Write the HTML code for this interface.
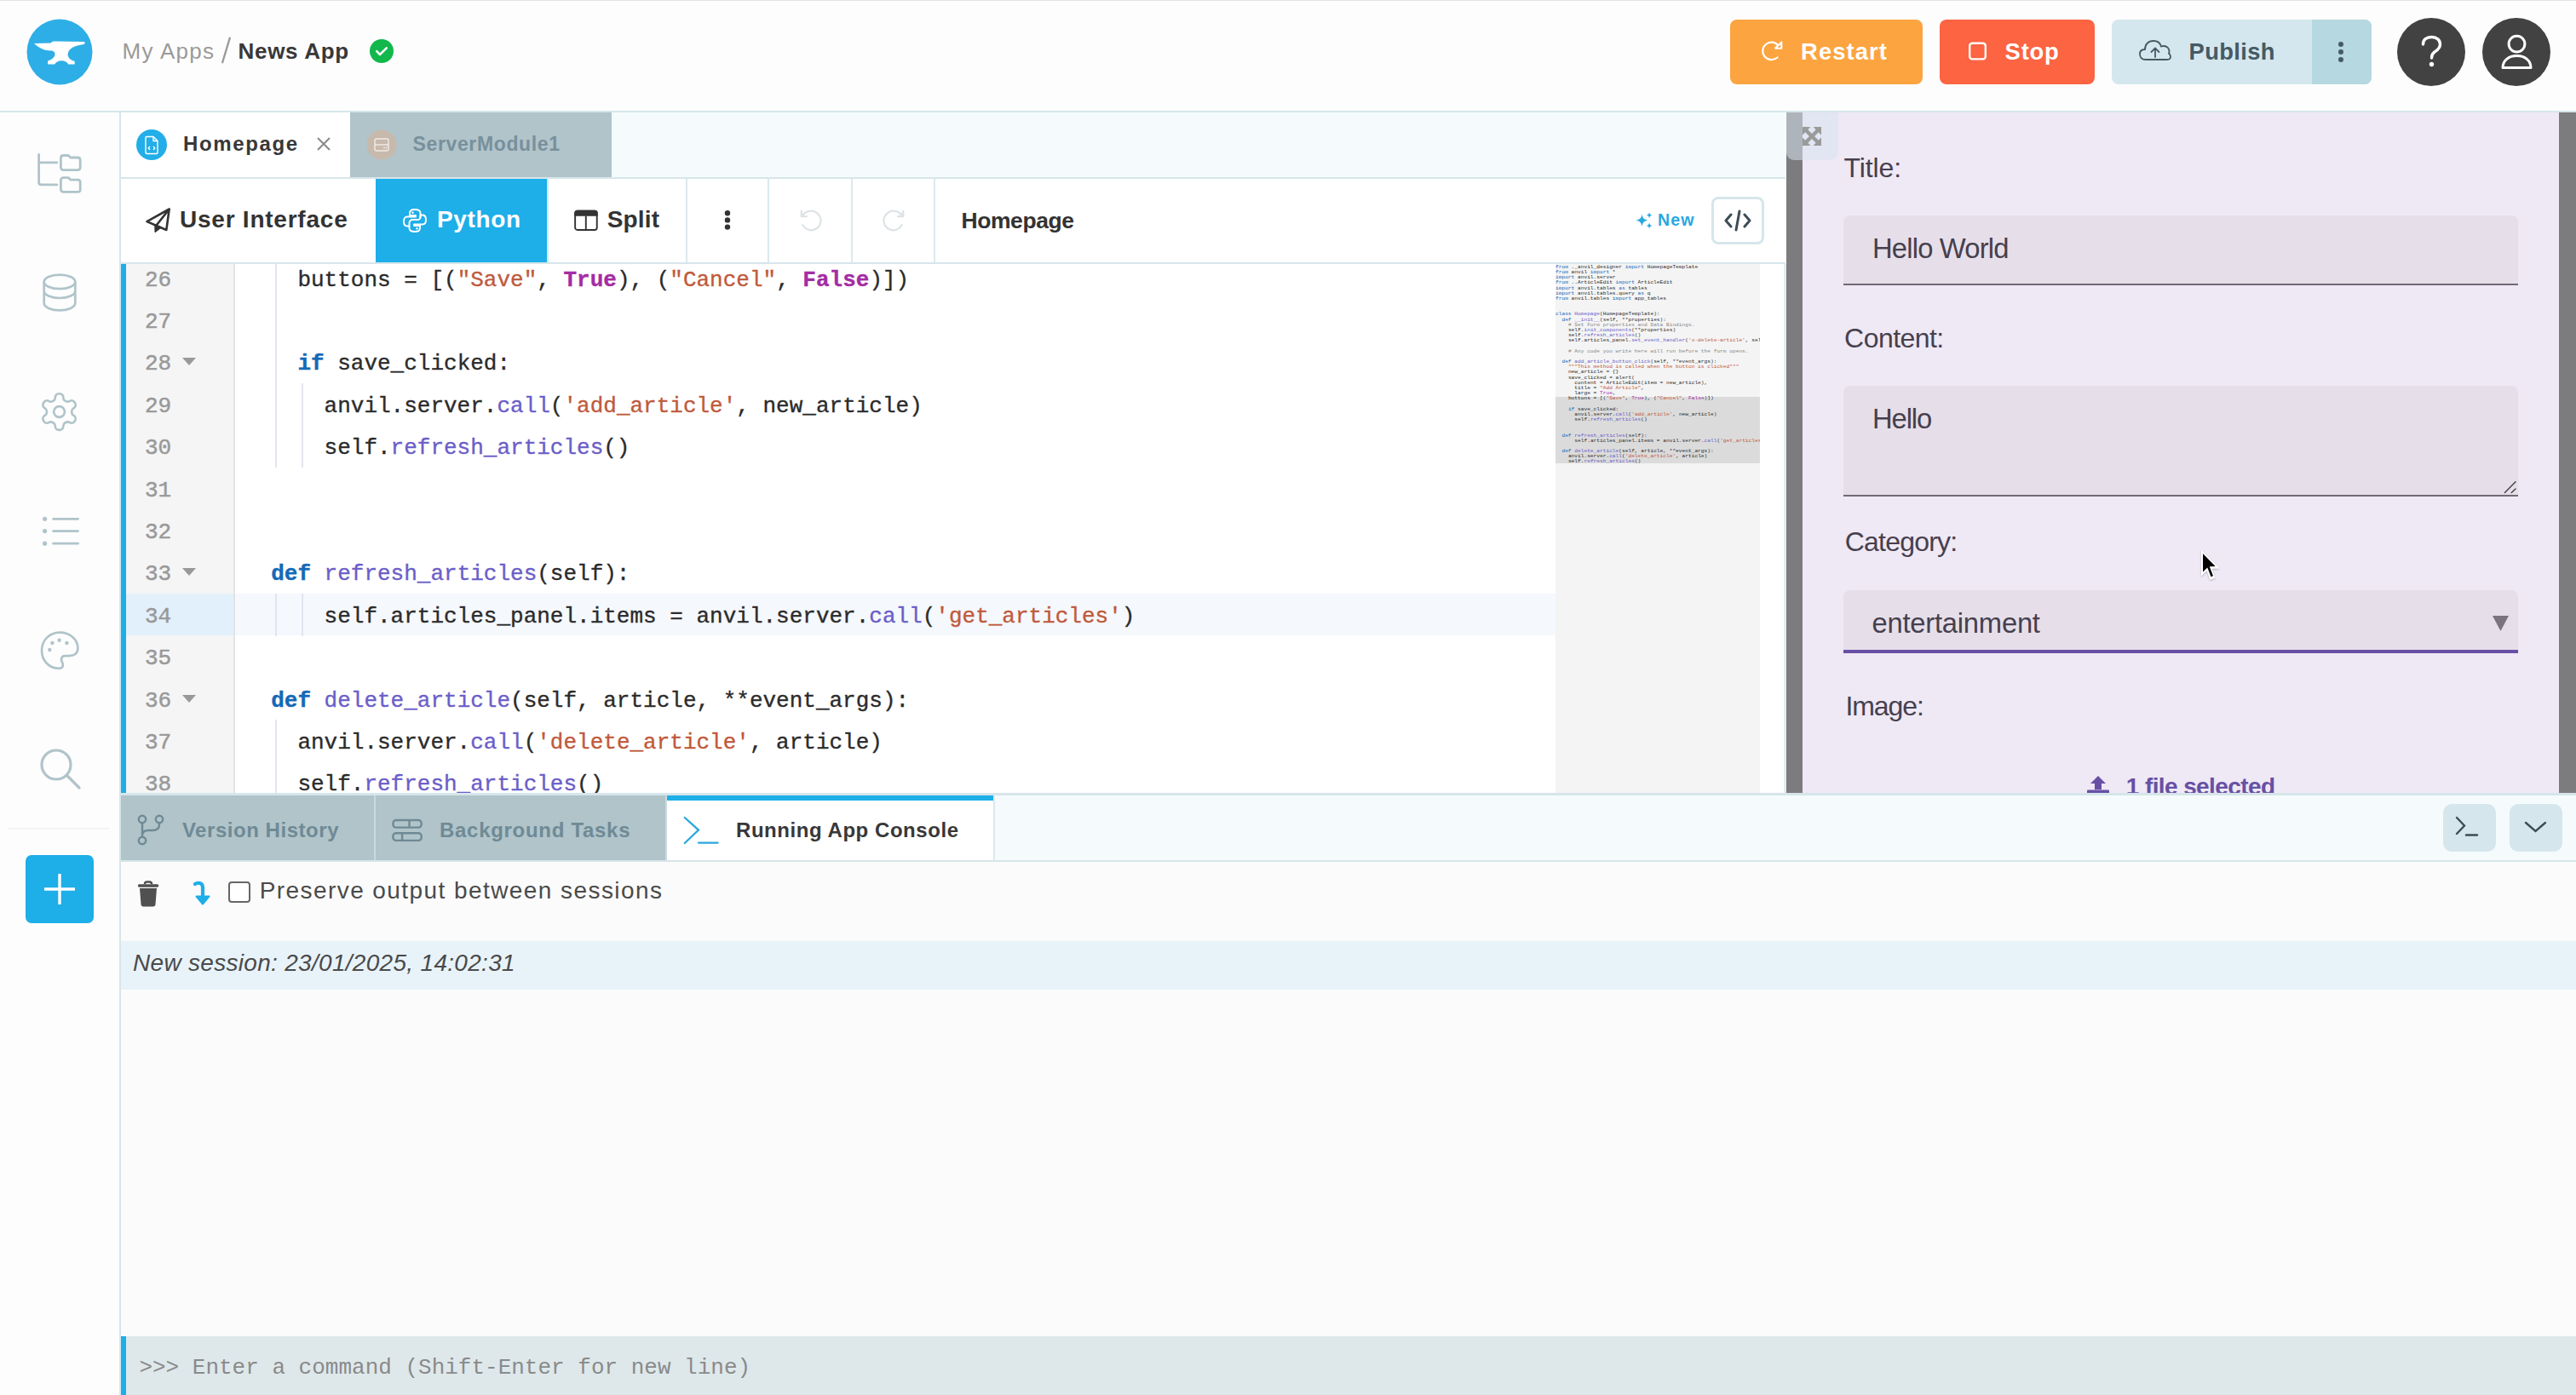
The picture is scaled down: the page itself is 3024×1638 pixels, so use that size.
<!DOCTYPE html>
<html><head><meta charset="utf-8"><title>Anvil - News App</title>
<style>
html,body{margin:0;padding:0;}
body{width:3024px;height:1638px;position:relative;overflow:hidden;background:#fdfdfd;font-family:"Liberation Sans",sans-serif;}
.r{position:absolute;display:block;}
.t{position:absolute;white-space:pre;}
</style></head><body>
<div class="r" style="left:0px;top:0px;width:3024px;height:1px;background:#e2e2e2;"></div>
<div class="r" style="left:0px;top:130px;width:3024px;height:2px;background:#d6e6eb;"></div>
<svg class="r" style="left:31px;top:22px;" width="78" height="78" viewBox="0 0 78 78"><circle cx="39" cy="39" r="38.5" fill="#2eaee6"/><path d="M9 29.1 L29 28.5 L29.9 27 L32.6 26.4 L67.9 27 C69 27.5 69 29.5 67.25 30 L61.2 31.25 C56 32.5 49 35 48.6 42.1 C48.5 45 51 48.5 56.7 49.9 V53.5 H49.2 C48 51 45 49.3 41 49.3 C37.5 49.3 34.5 51 33.2 53.5 H25.1 V49.6 C29 48.5 33.5 45.5 33.5 41.5 C33.5 38 30 37.6 28.1 37.6 C22 37.5 16 35.5 9 29.1 Z" fill="#fff"/></svg>
<div class="t" style="left:143.60px;top:46.99px;font-size:26px;line-height:26px;color:#9a9a9a;font-family:'Liberation Sans', sans-serif;letter-spacing:1.282px;">My Apps</div>
<svg class="r" style="left:255px;top:40px;" width="20" height="40" viewBox="0 0 20 40"><path d="M14.8 4.6 L6.2 33.2" stroke="#9a9a9a" stroke-width="2.3" stroke-linecap="round"/></svg>
<div class="t" style="left:279.50px;top:46.99px;font-size:26px;line-height:26px;color:#383838;font-family:'Liberation Sans', sans-serif;font-weight:700;letter-spacing:0.711px;">News App</div>
<svg class="r" style="left:433px;top:45px;" width="30" height="30" viewBox="0 0 30 30"><circle cx="15" cy="15" r="14" fill="#12b84b"/><path d="M9.2 15.2 l3.8 3.8 l7.8 -7.6" stroke="#fff" stroke-width="2.6" fill="none" stroke-linecap="round" stroke-linejoin="round"/></svg>
<div class="r" style="left:2031px;top:23px;width:226px;height:76px;background:#fca43f;border-radius:8px;"></div>
<svg class="r" style="left:2064.5px;top:45px;" width="34" height="30" viewBox="0 0 34 30"><path d="M21.5 22.5 A10.3 10.3 0 1 1 22.2 7.9" stroke="#fff" stroke-width="2.2" fill="none" stroke-linecap="round"/><path d="M19.2 11.6 L26.3 4.6 L26.3 11.8 Z" fill="none" stroke="#fff" stroke-width="2.1" stroke-linejoin="round"/></svg>
<div class="t" style="left:2114.00px;top:46.61px;font-size:27.4px;line-height:27.4px;color:#ffffff;font-family:'Liberation Sans', sans-serif;font-weight:700;letter-spacing:1.097px;">Restart</div>
<div class="r" style="left:2277px;top:23px;width:182px;height:76px;background:#fc6442;border-radius:8px;"></div>
<svg class="r" style="left:2309px;top:48px;" width="26" height="26" viewBox="0 0 26 26"><rect x="3.2" y="2.8" width="18.6" height="18.6" rx="3" stroke="#fff" stroke-width="2.4" fill="none"/></svg>
<div class="t" style="left:2353.60px;top:46.61px;font-size:27.4px;line-height:27.4px;color:#ffffff;font-family:'Liberation Sans', sans-serif;font-weight:700;letter-spacing:0.772px;">Stop</div>
<div class="r" style="left:2479px;top:23px;width:305px;height:76px;background:#d4e7ee;border-radius:8px;"></div>
<div class="r" style="left:2714px;top:23px;width:70px;height:76px;background:#b6d8e0;border-top-right-radius:8px;border-bottom-right-radius:8px;"></div>
<svg class="r" style="left:2510px;top:45px;" width="40" height="30" viewBox="0 0 40 30"><path d="M9 25 C4 25 2 22 2 18.5 C2 15 4.5 13 8 13 C8 7 12 3 18 3 C23 3 26 6 27 9.5 C28 9 29 9 30 9 C34 9 36.5 12 36.5 15.5 C36.5 16.5 36.3 17 36 17.5 C37 18.5 38 20 38 21.5 C38 23.5 36.5 25 34 25 Z" stroke="#455a64" stroke-width="1.8" fill="none"/><path d="M20 22 V12 M15.5 16 L20 11.5 L24.5 16" stroke="#455a64" stroke-width="1.8" fill="none" stroke-linecap="round"/></svg>
<div class="t" style="left:2569.50px;top:46.61px;font-size:27.4px;line-height:27.4px;color:#455a64;font-family:'Liberation Sans', sans-serif;font-weight:700;letter-spacing:0.360px;">Publish</div>
<svg class="r" style="left:2741px;top:48px;" width="14" height="28" viewBox="0 0 14 28"><circle cx="7" cy="4" r="3" fill="#455a64"/><circle cx="7" cy="13" r="3" fill="#455a64"/><circle cx="7" cy="22" r="3" fill="#455a64"/></svg>
<svg class="r" style="left:2814px;top:21px;" width="80" height="80" viewBox="0 0 80 80"><circle cx="40" cy="40" r="40" fill="#424242"/><path d="M30.5 31 C30.5 25.5 34.5 22.5 40.5 22.5 C46.5 22.5 50.5 26 50.5 31 C50.5 36 47 38 44 40 C41.5 41.8 40.5 43.5 40.5 47" stroke="#fff" stroke-width="3.4" fill="none" stroke-linecap="round"/><circle cx="40.5" cy="54.5" r="2.7" fill="#fff"/></svg>
<svg class="r" style="left:2914px;top:21px;" width="80" height="80" viewBox="0 0 80 80"><circle cx="40" cy="40" r="40" fill="#424242"/><circle cx="40.5" cy="30.6" r="9.4" stroke="#fff" stroke-width="3" fill="none"/><path d="M24 58.5 C24 50 31 44.5 40.5 44.5 C50 44.5 57 50 57 58.5 Z" stroke="#fff" stroke-width="3" fill="none" stroke-linejoin="round"/></svg>
<div class="r" style="left:140px;top:132px;width:2px;height:1506px;background:#d6e6eb;"></div>
<svg class="r" style="left:40px;top:178px;" width="60" height="52" viewBox="0 0 60 52"><path d="M5.6 3.5 V35.9 C5.6 37.6 6.9 38.9 8.6 38.9 H26.9 M5.6 12.8 H26.9" stroke="#b0c4ca" stroke-width="2.8" fill="none" stroke-linecap="round"/><path d="M34.4 4.5 H40.2 L42.7 7 H51.2 C52.9 7 54.2 8.3 54.2 10 V18.6 C54.2 20.3 52.9 21.6 51.2 21.6 H34.4 C32.7 21.6 31.4 20.3 31.4 18.6 V7.5 C31.4 5.8 32.7 4.5 34.4 4.5 Z M34.4 30.6 H40.2 L42.7 33.1 H51.2 C52.9 33.1 54.2 34.4 54.2 36.1 V44.4 C54.2 46.1 52.9 47.4 51.2 47.4 H34.4 C32.7 47.4 31.4 46.1 31.4 44.4 V33.6 C31.4 31.9 32.7 30.6 34.4 30.6 Z" stroke="#b0c4ca" stroke-width="2.8" fill="none" stroke-linejoin="round"/></svg>
<svg class="r" style="left:44px;top:318px;" width="52" height="52" viewBox="0 0 52 52"><ellipse cx="26" cy="12.9" rx="18.3" ry="8.3" stroke="#b0c4ca" stroke-width="2.7" fill="none"/><path d="M7.7 12.9 V38.1 A18.3 8.3 0 0 0 44.3 38.1 V12.9 M7.7 23.7 A18.3 8.3 0 0 0 44.3 23.7" stroke="#b0c4ca" stroke-width="2.7" fill="none"/></svg>
<svg class="r" style="left:44.4px;top:458.4px;" width="51.1" height="51.1" viewBox="0 0 24 24"><path d="M12.22 2h-.44a2 2 0 0 0-2 2v.18a2 2 0 0 1-1 1.73l-.43.25a2 2 0 0 1-2 0l-.15-.08a2 2 0 0 0-2.73.73l-.22.38a2 2 0 0 0 .73 2.73l.15.1a2 2 0 0 1 1 1.72v.51a2 2 0 0 1-1 1.74l-.15.09a2 2 0 0 0-.73 2.73l.22.38a2 2 0 0 0 2.73.73l.15-.08a2 2 0 0 1 2 0l.43.25a2 2 0 0 1 1 1.73V20a2 2 0 0 0 2 2h.44a2 2 0 0 0 2-2v-.18a2 2 0 0 1 1-1.73l.43-.25a2 2 0 0 1 2 0l.15.08a2 2 0 0 0 2.73-.73l.22-.39a2 2 0 0 0-.73-2.73l-.15-.08a2 2 0 0 1-1-1.74v-.5a2 2 0 0 1 1-1.74l.15-.09a2 2 0 0 0 .73-2.73l-.22-.38a2 2 0 0 0-2.73-.73l-.15.08a2 2 0 0 1-2 0l-.43-.25a2 2 0 0 1-1-1.73V4a2 2 0 0 0-2-2z" stroke="#b0c4ca" stroke-width="1.25" fill="none"/><circle cx="12" cy="12" r="3" stroke="#b0c4ca" stroke-width="1.25" fill="none"/></svg>
<svg class="r" style="left:46px;top:600px;" width="52" height="46" viewBox="0 0 52 46"><circle cx="6.6" cy="9.3" r="2.6" fill="#b0c4ca"/><circle cx="6.6" cy="23.6" r="2.6" fill="#b0c4ca"/><circle cx="6.6" cy="38.2" r="2.6" fill="#b0c4ca"/><path d="M16.5 9.3 H45.6 M16.5 23.6 H45.6 M16.5 38.2 H45.6" stroke="#b0c4ca" stroke-width="2.8" stroke-linecap="round"/></svg>
<svg class="r" style="left:44px;top:736px;" width="54" height="54" viewBox="0 0 54 54"><path transform="translate(26.2 27.7) scale(0.92) translate(-27 -27)" d="M27 4 C40 4 50 13 50 24 C50 31 45 34 39 34 H34 C31 34 29 36 29 39 C29 41 31 43 31 45 C31 48 29 50 26 50 C13 50 4 40 4 27 C4 14 14 4 27 4 Z" stroke="#b0c4ca" stroke-width="3" fill="none" stroke-linejoin="round"/><circle cx="17.4" cy="19" r="2.2" fill="#b0c4ca"/><circle cx="25.6" cy="15.8" r="2.2" fill="#b0c4ca"/><circle cx="34.4" cy="19" r="2.2" fill="#b0c4ca"/><circle cx="14.3" cy="27" r="2.2" fill="#b0c4ca"/></svg>
<svg class="r" style="left:44px;top:876px;" width="54" height="54" viewBox="0 0 54 54"><circle cx="22" cy="22" r="17" stroke="#b0c4ca" stroke-width="3.2" fill="none"/><path d="M34.5 34.5 L49 49" stroke="#b0c4ca" stroke-width="3.2" stroke-linecap="round"/></svg>
<div class="r" style="left:10px;top:972px;width:118px;height:2px;background:#f0f4f5;"></div>
<div class="r" style="left:30px;top:1004px;width:80px;height:80px;background:#1eaee8;border-radius:7px;"></div>
<svg class="r" style="left:30px;top:1004px;" width="80" height="80" viewBox="0 0 80 80"><path d="M40 22 V58 M22 40 H58" stroke="#fff" stroke-width="3.4"/></svg>
<div class="r" style="left:142px;top:132px;width:1954px;height:76px;background:#f5fbfc;"></div>
<div class="r" style="left:142px;top:208px;width:1954px;height:2px;background:#d6e6eb;"></div>
<div class="r" style="left:142px;top:132px;width:269px;height:76px;background:#ffffff;"></div>
<svg class="r" style="left:160px;top:152px;" width="36" height="36" viewBox="0 0 36 36"><circle cx="18" cy="18" r="18" fill="#22aee8"/><path d="M12 8.5 H20 L25 13.5 V27 C25 27.8 24.3 28.5 23.5 28.5 H12.5 C11.7 28.5 11 27.8 11 27 V9.5 C11 9 11.5 8.5 12 8.5 Z M20 8.5 V13.5 H25" stroke="#fff" stroke-width="1.4" fill="none" stroke-linejoin="round"/><path d="M16 20 L14.2 22 L16 24 M20 20 L21.8 22 L20 24" stroke="#fff" stroke-width="1.3" fill="none"/></svg>
<div class="t" style="left:215.00px;top:157.48px;font-size:24px;line-height:24px;color:#383838;font-family:'Liberation Sans', sans-serif;font-weight:700;letter-spacing:1.616px;">Homepage</div>
<svg class="r" style="left:371px;top:160px;" width="18" height="18" viewBox="0 0 18 18"><path d="M2 2 L16 16 M16 2 L2 16" stroke="#8a8a8a" stroke-width="2"/></svg>
<div class="r" style="left:411px;top:132px;width:307px;height:76px;background:#b0c4ca;"></div>
<svg class="r" style="left:430px;top:152px;" width="36" height="36" viewBox="0 0 36 36"><circle cx="18" cy="18" r="17.5" fill="#c7b9ac"/><rect x="10" y="11" width="16" height="14" rx="2" stroke="#f2ebe5" stroke-width="1.4" fill="none"/><path d="M10 18 H26" stroke="#f2ebe5" stroke-width="1.4"/><circle cx="21" cy="21.5" r="0.9" fill="#f2ebe5"/><circle cx="23.5" cy="21.5" r="0.9" fill="#f2ebe5"/></svg>
<div class="t" style="left:484.50px;top:158.33px;font-size:23px;line-height:23px;color:#78909c;font-family:'Liberation Sans', sans-serif;font-weight:700;letter-spacing:0.634px;">ServerModule1</div>
<div class="r" style="left:142px;top:210px;width:1954px;height:98px;background:#ffffff;"></div>
<div class="r" style="left:142px;top:308px;width:1954px;height:2px;background:#d6e6eb;"></div>
<svg class="r" style="left:170px;top:242px;" width="34" height="34" viewBox="0 0 34 34"><path d="M28.7 3.5 L2.5 18.1 L25.3 28 Z M28.7 3.5 L13.6 22.5" stroke="#333" stroke-width="2.6" fill="none" stroke-linejoin="round"/><path d="M11.8 21.5 L19.5 25 L12 30.8 Z" fill="#333" stroke="#333" stroke-width="1" stroke-linejoin="round"/></svg>
<div class="t" style="left:211.00px;top:244.30px;font-size:28px;line-height:28px;color:#333333;font-family:'Liberation Sans', sans-serif;font-weight:700;letter-spacing:0.765px;">User Interface</div>
<div class="r" style="left:441px;top:210px;width:201px;height:98px;background:#1eaee8;"></div>
<svg class="r" style="left:471px;top:243px;" width="32" height="32" viewBox="0 0 32 32"><path d="M16 3 C11 3 10 5 10 7 V10 H17 V11.5 H7 C4.5 11.5 3 13.5 3 17 C3 20.5 4.5 22.5 7 22.5 H9.5 V19 C9.5 16.5 11 15 13.5 15 H19 C21 15 22.5 13.5 22.5 11.5 V7 C22.5 4.5 20.5 3 16 3 Z M16 29 C21 29 22 27 22 25 V22 H15 V20.5 H25 C27.5 20.5 29 18.5 29 15 C29 11.5 27.5 9.5 25 9.5 H22.5" stroke="#fff" stroke-width="1.9" fill="none" stroke-linejoin="round"/><path d="M9.5 22.5 V25 C9.5 27.5 11.5 29 16 29 M22.5 9.5 V13" stroke="#fff" stroke-width="1.9" fill="none"/><circle cx="13.5" cy="6.8" r="1.2" fill="#fff"/><circle cx="18.5" cy="25.2" r="1.2" fill="#fff"/></svg>
<div class="t" style="left:513.00px;top:244.30px;font-size:28px;line-height:28px;color:#ffffff;font-family:'Liberation Sans', sans-serif;font-weight:700;letter-spacing:0.622px;">Python</div>
<svg class="r" style="left:672px;top:245px;" width="32" height="28" viewBox="0 0 32 28"><rect x="3.15" y="2.75" width="25.6" height="22.2" rx="2.8" stroke="#333" stroke-width="1.9" fill="none"/><path d="M2.2 5 C2.2 3.2 3.4 1.8 5.2 1.8 H26.7 C28.5 1.8 29.7 3.2 29.7 5 V8.7 H2.2 Z" fill="#333"/><path d="M15.8 8.7 V25" stroke="#333" stroke-width="1.9"/></svg>
<div class="r" style="left:642px;top:210px;width:2px;height:98px;background:#c8ecfa;"></div>
<div class="t" style="left:712.70px;top:244.30px;font-size:28px;line-height:28px;color:#333333;font-family:'Liberation Sans', sans-serif;font-weight:700;letter-spacing:0.156px;">Split</div>
<div class="r" style="left:805px;top:210px;width:2px;height:98px;background:#dce9ed;"></div>
<div class="r" style="left:901px;top:210px;width:2px;height:98px;background:#dce9ed;"></div>
<div class="r" style="left:999px;top:210px;width:2px;height:98px;background:#dce9ed;"></div>
<div class="r" style="left:1096px;top:210px;width:2px;height:98px;background:#dce9ed;"></div>
<svg class="r" style="left:846px;top:242px;" width="16" height="32" viewBox="0 0 16 32"><circle cx="8" cy="8.3" r="3.2" fill="#333"/><circle cx="8" cy="16.4" r="3.2" fill="#333"/><circle cx="8" cy="24.6" r="3.2" fill="#333"/></svg>
<svg class="r" style="left:937.2px;top:244.3px;" width="30" height="30" viewBox="0 0 24 24"><path d="M4.3 16.2 A9 9 0 1 0 12 3 A9.75 9.75 0 0 0 5.26 5.74 L3 8 M3 3 V8 H8" stroke="#dde3e6" stroke-width="1.8" fill="none" stroke-linecap="round" stroke-linejoin="round"/></svg>
<svg class="r" style="left:1034px;top:244.3px;" width="30" height="30" viewBox="0 0 24 24"><path transform="translate(24 0) scale(-1 1)" d="M4.3 16.2 A9 9 0 1 0 12 3 A9.75 9.75 0 0 0 5.26 5.74 L3 8 M3 3 V8 H8" stroke="#dde3e6" stroke-width="1.8" fill="none" stroke-linecap="round" stroke-linejoin="round"/></svg>
<div class="t" style="left:1128.50px;top:245.57px;font-size:26.5px;line-height:26.5px;color:#333333;font-family:'Liberation Sans', sans-serif;font-weight:700;letter-spacing:-0.424px;">Homepage</div>
<svg class="r" style="left:1918px;top:246px;" width="26" height="26" viewBox="0 0 26 26"><path d="M9.5 5.5 C10.3 10 11.5 11.8 16.7 12.7 C11.5 13.6 10.3 15.4 9.5 19.9 C8.7 15.4 7.5 13.6 2.3 12.7 C7.5 11.8 8.7 10 9.5 5.5 Z" fill="#29a8e0"/><path d="M18.1 3 C18.5 5.4 19 6.2 21.6 6.7 C19 7.2 18.5 8 18.1 10.4 C17.7 8 17.2 7.2 14.6 6.7 C17.2 6.2 17.7 5.4 18.1 3 Z M18.1 15.3 C18.5 17.7 19 18.5 21.6 19 C19 19.5 18.5 20.3 18.1 22.7 C17.7 20.3 17.2 19.5 14.6 19 C17.2 18.5 17.7 17.7 18.1 15.3 Z" fill="#29a8e0"/></svg>
<div class="t" style="left:1945.90px;top:249.31px;font-size:19.6px;line-height:19.6px;color:#29a8e0;font-family:'Liberation Sans', sans-serif;font-weight:700;letter-spacing:1.182px;">New</div>
<div class="r" style="left:2009px;top:231px;width:62px;height:56px;background:#ffffff;border:3px solid #d6e6eb;border-radius:8px;box-sizing:border-box;"></div>
<svg class="r" style="left:2022px;top:244px;" width="36" height="30" viewBox="0 0 36 30"><path d="M10 8 L4 15 L10 22 M26 8 L32 15 L26 22 M20 4 L16 26" stroke="#3d4d55" stroke-width="3" fill="none" stroke-linecap="round" stroke-linejoin="round"/></svg>
<div class="r" style="left:142px;top:310px;width:1954px;height:621px;background:#ffffff;"></div>
<div class="r" style="left:142px;top:310px;width:6px;height:621px;background:#1eaee8;"></div>
<div class="r" style="left:148px;top:310px;width:126px;height:621px;background:#f5f5f5;"></div>
<div class="r" style="left:274px;top:310px;width:2px;height:621px;background:#e3e3e3;"></div>
<div class="r" style="left:148px;top:697px;width:126px;height:49px;background:#e2f0fb;"></div>
<div class="r" style="left:276px;top:697px;width:1550px;height:49px;background:#f5f8fc;"></div>
<div class="r" style="left:323px;top:310px;width:2px;height:239px;background:#e4e4f0;"></div>
<div class="r" style="left:354px;top:450px;width:2px;height:99px;background:#e4e4f0;"></div>
<div class="r" style="left:323px;top:697px;width:2px;height:50px;background:#e4e4f0;"></div>
<div class="r" style="left:354px;top:697px;width:2px;height:50px;background:#e4e4f0;"></div>
<div class="r" style="left:323px;top:845px;width:2px;height:99px;background:#e4e4f0;"></div>
<div class="t" style="left:170.00px;top:315.67px;font-size:26.0px;line-height:26.0px;color:#999999;font-family:'Liberation Mono', monospace;-webkit-text-stroke:0.5px #999;">26</div>
<div class="t" style="left:349.40px;top:315.67px;font-size:26.0px;line-height:26.0px;color:#2b2b2b;font-family:'Liberation Mono', monospace;white-space:pre;-webkit-text-stroke:0.35px currentColor;">buttons = [(<span style="color:#c05a3c">&quot;Save&quot;</span>, <span style="color:#a42ca4;font-weight:700">True</span>), (<span style="color:#c05a3c">&quot;Cancel&quot;</span>, <span style="color:#a42ca4;font-weight:700">False</span>)])</div>
<div class="t" style="left:170.00px;top:365.07px;font-size:26.0px;line-height:26.0px;color:#999999;font-family:'Liberation Mono', monospace;-webkit-text-stroke:0.5px #999;">27</div>
<div class="t" style="left:170.00px;top:414.47px;font-size:26.0px;line-height:26.0px;color:#999999;font-family:'Liberation Mono', monospace;-webkit-text-stroke:0.5px #999;">28</div>
<svg class="r" style="left:213px;top:419.30000000000007px;" width="18" height="12" viewBox="0 0 18 12"><path d="M1 1 H17 L9 10 Z" fill="#999"/></svg>
<div class="t" style="left:349.40px;top:414.47px;font-size:26.0px;line-height:26.0px;color:#2b2b2b;font-family:'Liberation Mono', monospace;white-space:pre;-webkit-text-stroke:0.35px currentColor;"><span style="color:#1469b8;font-weight:700">if</span> save_clicked:</div>
<div class="t" style="left:170.00px;top:463.87px;font-size:26.0px;line-height:26.0px;color:#999999;font-family:'Liberation Mono', monospace;-webkit-text-stroke:0.5px #999;">29</div>
<div class="t" style="left:380.60px;top:463.87px;font-size:26.0px;line-height:26.0px;color:#2b2b2b;font-family:'Liberation Mono', monospace;white-space:pre;-webkit-text-stroke:0.35px currentColor;">anvil.server.<span style="color:#6b5ec8">call</span>(<span style="color:#c05a3c">&#x27;add_article&#x27;</span>, new_article)</div>
<div class="t" style="left:170.00px;top:513.27px;font-size:26.0px;line-height:26.0px;color:#999999;font-family:'Liberation Mono', monospace;-webkit-text-stroke:0.5px #999;">30</div>
<div class="t" style="left:380.60px;top:513.27px;font-size:26.0px;line-height:26.0px;color:#2b2b2b;font-family:'Liberation Mono', monospace;white-space:pre;-webkit-text-stroke:0.35px currentColor;">self.<span style="color:#6b5ec8">refresh_articles</span>()</div>
<div class="t" style="left:170.00px;top:562.67px;font-size:26.0px;line-height:26.0px;color:#999999;font-family:'Liberation Mono', monospace;-webkit-text-stroke:0.5px #999;">31</div>
<div class="t" style="left:170.00px;top:612.07px;font-size:26.0px;line-height:26.0px;color:#999999;font-family:'Liberation Mono', monospace;-webkit-text-stroke:0.5px #999;">32</div>
<div class="t" style="left:170.00px;top:661.47px;font-size:26.0px;line-height:26.0px;color:#999999;font-family:'Liberation Mono', monospace;-webkit-text-stroke:0.5px #999;">33</div>
<svg class="r" style="left:213px;top:666.3000000000001px;" width="18" height="12" viewBox="0 0 18 12"><path d="M1 1 H17 L9 10 Z" fill="#999"/></svg>
<div class="t" style="left:318.20px;top:661.47px;font-size:26.0px;line-height:26.0px;color:#2b2b2b;font-family:'Liberation Mono', monospace;white-space:pre;-webkit-text-stroke:0.35px currentColor;"><span style="color:#1469b8;font-weight:700">def</span> <span style="color:#6b5ec8">refresh_articles</span>(self):</div>
<div class="t" style="left:170.00px;top:710.87px;font-size:26.0px;line-height:26.0px;color:#999999;font-family:'Liberation Mono', monospace;-webkit-text-stroke:0.5px #999;">34</div>
<div class="t" style="left:380.60px;top:710.87px;font-size:26.0px;line-height:26.0px;color:#2b2b2b;font-family:'Liberation Mono', monospace;white-space:pre;-webkit-text-stroke:0.35px currentColor;">self.articles_panel.items = anvil.server.<span style="color:#6b5ec8">call</span>(<span style="color:#c05a3c">&#x27;get_articles&#x27;</span>)</div>
<div class="t" style="left:170.00px;top:760.27px;font-size:26.0px;line-height:26.0px;color:#999999;font-family:'Liberation Mono', monospace;-webkit-text-stroke:0.5px #999;">35</div>
<div class="t" style="left:170.00px;top:809.67px;font-size:26.0px;line-height:26.0px;color:#999999;font-family:'Liberation Mono', monospace;-webkit-text-stroke:0.5px #999;">36</div>
<svg class="r" style="left:213px;top:814.5px;" width="18" height="12" viewBox="0 0 18 12"><path d="M1 1 H17 L9 10 Z" fill="#999"/></svg>
<div class="t" style="left:318.20px;top:809.67px;font-size:26.0px;line-height:26.0px;color:#2b2b2b;font-family:'Liberation Mono', monospace;white-space:pre;-webkit-text-stroke:0.35px currentColor;"><span style="color:#1469b8;font-weight:700">def</span> <span style="color:#6b5ec8">delete_article</span>(self, article, **event_args):</div>
<div class="t" style="left:170.00px;top:859.07px;font-size:26.0px;line-height:26.0px;color:#999999;font-family:'Liberation Mono', monospace;-webkit-text-stroke:0.5px #999;">37</div>
<div class="t" style="left:349.40px;top:859.07px;font-size:26.0px;line-height:26.0px;color:#2b2b2b;font-family:'Liberation Mono', monospace;white-space:pre;-webkit-text-stroke:0.35px currentColor;">anvil.server.<span style="color:#6b5ec8">call</span>(<span style="color:#c05a3c">&#x27;delete_article&#x27;</span>, article)</div>
<div class="t" style="left:170.00px;top:908.47px;font-size:26.0px;line-height:26.0px;color:#999999;font-family:'Liberation Mono', monospace;-webkit-text-stroke:0.5px #999;">38</div>
<div class="t" style="left:349.40px;top:908.47px;font-size:26.0px;line-height:26.0px;color:#2b2b2b;font-family:'Liberation Mono', monospace;white-space:pre;-webkit-text-stroke:0.35px currentColor;">self.<span style="color:#6b5ec8">refresh_articles</span>()</div>
<div class="r" style="left:1826px;top:310px;width:240px;height:621px;background:#f4f4f4;"></div>
<div class="r" style="left:1826px;top:466px;width:240px;height:78px;background:#dbdbdb;"></div>
<div class="r" style="left:1826px;top:310px;width:240px;height:250px;overflow:hidden;"><div class="t" style="left:0.00px;top:0.80px;font-size:6.2px;line-height:6.18px;font-family:'Liberation Mono', monospace;white-space:pre;"><span style="color:#1469b8">from</span><span style="color:#2b2b2b"> ._anvil_designer </span><span style="color:#1469b8">import</span><span style="color:#2b2b2b"> HomepageTemplate</span></div><div class="t" style="left:0.00px;top:6.98px;font-size:6.2px;line-height:6.18px;font-family:'Liberation Mono', monospace;white-space:pre;"><span style="color:#1469b8">from</span><span style="color:#2b2b2b"> anvil </span><span style="color:#1469b8">import</span><span style="color:#2b2b2b"> *</span></div><div class="t" style="left:0.00px;top:13.16px;font-size:6.2px;line-height:6.18px;font-family:'Liberation Mono', monospace;white-space:pre;"><span style="color:#1469b8">import</span><span style="color:#2b2b2b"> anvil.server</span></div><div class="t" style="left:0.00px;top:19.34px;font-size:6.2px;line-height:6.18px;font-family:'Liberation Mono', monospace;white-space:pre;"><span style="color:#1469b8">from</span><span style="color:#2b2b2b"> ..ArticleEdit </span><span style="color:#1469b8">import</span><span style="color:#2b2b2b"> ArticleEdit</span></div><div class="t" style="left:0.00px;top:25.52px;font-size:6.2px;line-height:6.18px;font-family:'Liberation Mono', monospace;white-space:pre;"><span style="color:#1469b8">import</span><span style="color:#2b2b2b"> anvil.tables </span><span style="color:#1469b8">as</span><span style="color:#2b2b2b"> tables</span></div><div class="t" style="left:0.00px;top:31.70px;font-size:6.2px;line-height:6.18px;font-family:'Liberation Mono', monospace;white-space:pre;"><span style="color:#1469b8">import</span><span style="color:#2b2b2b"> anvil.tables.query </span><span style="color:#1469b8">as</span><span style="color:#2b2b2b"> q</span></div><div class="t" style="left:0.00px;top:37.88px;font-size:6.2px;line-height:6.18px;font-family:'Liberation Mono', monospace;white-space:pre;"><span style="color:#1469b8">from</span><span style="color:#2b2b2b"> anvil.tables </span><span style="color:#1469b8">import</span><span style="color:#2b2b2b"> app_tables</span></div><div class="t" style="left:0.00px;top:56.42px;font-size:6.2px;line-height:6.18px;font-family:'Liberation Mono', monospace;white-space:pre;"><span style="color:#1469b8">class</span><span style="color:#2b2b2b"> </span><span style="color:#6b5ec8">Homepage</span><span style="color:#2b2b2b">(HomepageTemplate):</span></div><div class="t" style="left:7.44px;top:62.60px;font-size:6.2px;line-height:6.18px;font-family:'Liberation Mono', monospace;white-space:pre;"><span style="color:#1469b8">def</span><span style="color:#2b2b2b"> </span><span style="color:#6b5ec8">__init__</span><span style="color:#2b2b2b">(self, **properties):</span></div><div class="t" style="left:14.88px;top:68.78px;font-size:6.2px;line-height:6.18px;font-family:'Liberation Mono', monospace;white-space:pre;"><span style="color:#888"># Set Form properties and Data Bindings.</span></div><div class="t" style="left:14.88px;top:74.96px;font-size:6.2px;line-height:6.18px;font-family:'Liberation Mono', monospace;white-space:pre;"><span style="color:#2b2b2b">self.</span><span style="color:#6b5ec8">init_components</span><span style="color:#2b2b2b">(**properties)</span></div><div class="t" style="left:14.88px;top:81.14px;font-size:6.2px;line-height:6.18px;font-family:'Liberation Mono', monospace;white-space:pre;"><span style="color:#2b2b2b">self.</span><span style="color:#6b5ec8">refresh_articles</span><span style="color:#2b2b2b">()</span></div><div class="t" style="left:14.88px;top:87.32px;font-size:6.2px;line-height:6.18px;font-family:'Liberation Mono', monospace;white-space:pre;"><span style="color:#2b2b2b">self.articles_panel.</span><span style="color:#6b5ec8">set_event_handler</span><span style="color:#2b2b2b">(</span><span style="color:#c05a3c">&#x27;x-delete-article&#x27;</span><span style="color:#2b2b2b">, sel</span></div><div class="t" style="left:14.88px;top:99.68px;font-size:6.2px;line-height:6.18px;font-family:'Liberation Mono', monospace;white-space:pre;"><span style="color:#888"># Any code you write here will run before the form opens.</span></div><div class="t" style="left:7.44px;top:112.04px;font-size:6.2px;line-height:6.18px;font-family:'Liberation Mono', monospace;white-space:pre;"><span style="color:#1469b8">def</span><span style="color:#2b2b2b"> </span><span style="color:#6b5ec8">add_article_button_click</span><span style="color:#2b2b2b">(self, **event_args):</span></div><div class="t" style="left:14.88px;top:118.22px;font-size:6.2px;line-height:6.18px;font-family:'Liberation Mono', monospace;white-space:pre;"><span style="color:#c05a3c">&quot;&quot;&quot;This method is called when the button is clicked&quot;&quot;&quot;</span></div><div class="t" style="left:14.88px;top:124.40px;font-size:6.2px;line-height:6.18px;font-family:'Liberation Mono', monospace;white-space:pre;"><span style="color:#2b2b2b">new_article = {}</span></div><div class="t" style="left:14.88px;top:130.58px;font-size:6.2px;line-height:6.18px;font-family:'Liberation Mono', monospace;white-space:pre;"><span style="color:#2b2b2b">save_clicked = alert(</span></div><div class="t" style="left:22.32px;top:136.76px;font-size:6.2px;line-height:6.18px;font-family:'Liberation Mono', monospace;white-space:pre;"><span style="color:#2b2b2b">content = ArticleEdit(item = new_article),</span></div><div class="t" style="left:22.32px;top:142.94px;font-size:6.2px;line-height:6.18px;font-family:'Liberation Mono', monospace;white-space:pre;"><span style="color:#2b2b2b">title = </span><span style="color:#c05a3c">&quot;Add Article&quot;</span><span style="color:#2b2b2b">,</span></div><div class="t" style="left:22.32px;top:149.12px;font-size:6.2px;line-height:6.18px;font-family:'Liberation Mono', monospace;white-space:pre;"><span style="color:#2b2b2b">large = </span><span style="color:#a42ca4">True</span><span style="color:#2b2b2b">,</span></div><div class="t" style="left:14.88px;top:155.30px;font-size:6.2px;line-height:6.18px;font-family:'Liberation Mono', monospace;white-space:pre;"><span style="color:#2b2b2b">buttons = [(</span><span style="color:#c05a3c">&quot;Save&quot;</span><span style="color:#2b2b2b">, </span><span style="color:#a42ca4">True</span><span style="color:#2b2b2b">), (</span><span style="color:#c05a3c">&quot;Cancel&quot;</span><span style="color:#2b2b2b">, </span><span style="color:#a42ca4">False</span><span style="color:#2b2b2b">)])</span></div><div class="t" style="left:14.88px;top:167.66px;font-size:6.2px;line-height:6.18px;font-family:'Liberation Mono', monospace;white-space:pre;"><span style="color:#1469b8">if</span><span style="color:#2b2b2b"> save_clicked:</span></div><div class="t" style="left:22.32px;top:173.84px;font-size:6.2px;line-height:6.18px;font-family:'Liberation Mono', monospace;white-space:pre;"><span style="color:#2b2b2b">anvil.server.</span><span style="color:#6b5ec8">call</span><span style="color:#2b2b2b">(</span><span style="color:#c05a3c">&#x27;add_article&#x27;</span><span style="color:#2b2b2b">, new_article)</span></div><div class="t" style="left:22.32px;top:180.02px;font-size:6.2px;line-height:6.18px;font-family:'Liberation Mono', monospace;white-space:pre;"><span style="color:#2b2b2b">self.</span><span style="color:#6b5ec8">refresh_articles</span><span style="color:#2b2b2b">()</span></div><div class="t" style="left:7.44px;top:198.56px;font-size:6.2px;line-height:6.18px;font-family:'Liberation Mono', monospace;white-space:pre;"><span style="color:#1469b8">def</span><span style="color:#2b2b2b"> </span><span style="color:#6b5ec8">refresh_articles</span><span style="color:#2b2b2b">(self):</span></div><div class="t" style="left:22.32px;top:204.74px;font-size:6.2px;line-height:6.18px;font-family:'Liberation Mono', monospace;white-space:pre;"><span style="color:#2b2b2b">self.articles_panel.items = anvil.server.</span><span style="color:#6b5ec8">call</span><span style="color:#2b2b2b">(</span><span style="color:#c05a3c">&#x27;get_articles</span></div><div class="t" style="left:7.44px;top:217.10px;font-size:6.2px;line-height:6.18px;font-family:'Liberation Mono', monospace;white-space:pre;"><span style="color:#1469b8">def</span><span style="color:#2b2b2b"> </span><span style="color:#6b5ec8">delete_article</span><span style="color:#2b2b2b">(self, article, **event_args):</span></div><div class="t" style="left:14.88px;top:223.28px;font-size:6.2px;line-height:6.18px;font-family:'Liberation Mono', monospace;white-space:pre;"><span style="color:#2b2b2b">anvil.server.</span><span style="color:#6b5ec8">call</span><span style="color:#2b2b2b">(</span><span style="color:#c05a3c">&#x27;delete_article&#x27;</span><span style="color:#2b2b2b">, article)</span></div><div class="t" style="left:14.88px;top:229.46px;font-size:6.2px;line-height:6.18px;font-family:'Liberation Mono', monospace;white-space:pre;"><span style="color:#2b2b2b">self.</span><span style="color:#6b5ec8">refresh_articles</span><span style="color:#2b2b2b">()</span></div></div>
<div class="r" style="left:2094px;top:310px;width:3px;height:621px;background:#e0ecf0;"></div>
<div class="r" style="left:2097px;top:132px;width:927px;height:799px;background:#efe8f5;"></div>
<div class="r" style="left:2097px;top:132px;width:19px;height:799px;background:#7c7b7e;"></div>
<div class="r" style="left:3004px;top:132px;width:20px;height:799px;background:#7c7b7e;"></div>
<div class="r" style="left:2097px;top:132px;width:61px;height:56px;background:rgba(215,228,238,0.55);border-radius:0 0 9px 9px;"></div>
<svg class="r" style="left:2116px;top:149px;" width="22" height="22" viewBox="0 0 22 22"><path d="M3.5 3.5 L18.5 18.5 M18.5 3.5 L3.5 18.5" stroke="#9a9a9a" stroke-width="4.4"/><path d="M0 0 H9.5 L0 9.5 Z M22 0 H12.5 L22 9.5 Z M0 22 H9.5 L0 12.5 Z M22 22 H12.5 L22 12.5 Z" fill="#9a9a9a"/></svg>
<div class="t" style="left:2164.60px;top:180.71px;font-size:32px;line-height:32px;color:#46404d;font-family:'Liberation Sans', sans-serif;letter-spacing:-0.132px;">Title:</div>
<div class="r" style="left:2164px;top:253px;width:792px;height:82px;background:#e6dfea;border-radius:8px 8px 0 0;"></div>
<div class="r" style="left:2164px;top:333px;width:792px;height:2px;background:#6f6a75;"></div>
<div class="t" style="left:2198.00px;top:276.13px;font-size:32.8px;line-height:32.8px;color:#46404d;font-family:'Liberation Sans', sans-serif;letter-spacing:-0.842px;">Hello World</div>
<div class="t" style="left:2165.10px;top:380.61px;font-size:32px;line-height:32px;color:#46404d;font-family:'Liberation Sans', sans-serif;letter-spacing:-0.551px;">Content:</div>
<div class="r" style="left:2164px;top:453px;width:792px;height:130px;background:#e6dfea;border-radius:8px 8px 0 0;"></div>
<div class="r" style="left:2164px;top:581px;width:792px;height:2px;background:#6f6a75;"></div>
<svg class="r" style="left:2938px;top:562px;" width="18" height="18" viewBox="0 0 18 18"><path d="M2.4 16.5 L15 3.8 M10.3 16.5 L15 12" stroke="#444" stroke-width="1.5" stroke-linecap="round"/></svg>
<div class="t" style="left:2198.00px;top:476.43px;font-size:32.8px;line-height:32.8px;color:#46404d;font-family:'Liberation Sans', sans-serif;letter-spacing:-1.138px;">Hello</div>
<div class="t" style="left:2165.80px;top:620.41px;font-size:32px;line-height:32px;color:#46404d;font-family:'Liberation Sans', sans-serif;letter-spacing:-0.790px;">Category:</div>
<div class="r" style="left:2164px;top:693px;width:792px;height:74px;background:#e6dfea;border-radius:8px 8px 0 0;"></div>
<div class="r" style="left:2164px;top:763px;width:792px;height:4px;background:#6750a4;"></div>
<div class="t" style="left:2197.50px;top:716.13px;font-size:32.8px;line-height:32.8px;color:#46404d;font-family:'Liberation Sans', sans-serif;letter-spacing:-0.256px;">entertainment</div>
<svg class="r" style="left:2925px;top:722px;" width="21" height="21" viewBox="0 0 21 21"><path d="M1 1 H20 L10.5 19 Z" fill="#79747e"/></svg>
<div class="t" style="left:2166.40px;top:812.91px;font-size:32px;line-height:32px;color:#46404d;font-family:'Liberation Sans', sans-serif;letter-spacing:-1.045px;">Image:</div>
<svg class="r" style="left:2450px;top:910px;" width="26" height="21" viewBox="0 0 26 21"><path d="M13 1 L22 10 H17 V17 H9 V10 H4 Z" fill="#6750a4"/><rect x="0" y="17.5" width="26" height="4" rx="1" fill="#6750a4"/></svg>
<div class="r" style="left:2480px;top:880px;width:400px;height:51px;overflow:hidden;"><div class="t"  style="left:15.80px;top:29.80px;font-size:28px;line-height:28px;color:#6750a4;font-family:'Liberation Sans', sans-serif;font-weight:700;letter-spacing:-0.604px;">1 file selected</div>
</div>
<svg class="r" style="left:2582px;top:643px;filter:drop-shadow(0 1px 1px rgba(0,0,0,0.25));" width="28" height="42" viewBox="0 0 28 42"><path d="M2 2.5 L2 33.5 L8.7 27.2 L12.5 38 L18.5 35.5 L14.7 24.8 L23.5 24.5 Z" fill="#fff"/><path d="M4 7 L4 28.5 L9.3 23.5 L13.5 34.3 L16 33.2 L11.8 22.2 L18.7 22 Z" fill="#000"/></svg>
<div class="r" style="left:142px;top:931px;width:2882px;height:3px;background:#d6e6eb;"></div>
<div class="r" style="left:142px;top:934px;width:2882px;height:76px;background:#f5fbfc;"></div>
<div class="r" style="left:142px;top:1010px;width:2882px;height:2px;background:#d6e6eb;"></div>
<div class="r" style="left:142px;top:934px;width:297px;height:76px;background:#b0c4ca;"></div>
<div class="r" style="left:439px;top:934px;width:2px;height:76px;background:#c9dadf;"></div>
<div class="r" style="left:441px;top:934px;width:340px;height:76px;background:#b0c4ca;"></div>
<div class="r" style="left:781px;top:934px;width:2px;height:76px;background:#c9dadf;"></div>
<div class="r" style="left:783px;top:934px;width:383px;height:76px;background:#ffffff;"></div>
<div class="r" style="left:783px;top:934px;width:383px;height:6px;background:#1eaee8;"></div>
<div class="r" style="left:1166px;top:934px;width:2px;height:76px;background:#dbe8ec;"></div>
<svg class="r" style="left:160px;top:956px;" width="36" height="38" viewBox="0 0 36 38"><circle cx="7" cy="6" r="4.2" stroke="#6f8a95" stroke-width="2.4" fill="none"/><circle cx="27" cy="6" r="4.2" stroke="#6f8a95" stroke-width="2.4" fill="none"/><circle cx="7" cy="31" r="4.2" stroke="#6f8a95" stroke-width="2.4" fill="none"/><path d="M7 10.2 V26.8 M27 10.2 V12 C27 17 24 19 19 19 H14 C10 19 7 21 7 25" stroke="#6f8a95" stroke-width="2.4" fill="none"/></svg>
<div class="t" style="left:213.90px;top:962.58px;font-size:24px;line-height:24px;color:#6f8a95;font-family:'Liberation Sans', sans-serif;font-weight:700;letter-spacing:0.538px;">Version History</div>
<svg class="r" style="left:458px;top:958px;" width="40" height="34" viewBox="0 0 40 34"><rect x="3.4" y="5" width="33.3" height="8.6" rx="3.5" stroke="#6f8a95" stroke-width="2.4" fill="none"/><rect x="3.4" y="20.3" width="33.3" height="8.6" rx="3.5" stroke="#6f8a95" stroke-width="2.4" fill="none"/><path d="M22.5 5 V13.6 M14.1 20.3 V28.9" stroke="#6f8a95" stroke-width="2.4"/></svg>
<div class="t" style="left:516.00px;top:962.58px;font-size:24px;line-height:24px;color:#6f8a95;font-family:'Liberation Sans', sans-serif;font-weight:700;letter-spacing:0.703px;">Background Tasks</div>
<svg class="r" style="left:800px;top:955px;" width="46" height="40" viewBox="0 0 46 40"><path d="M3.8 5 L20 19.6 L3.8 35" stroke="#29a6de" stroke-width="2.3" fill="none" stroke-linecap="round"/><path d="M20 34.6 H42.6" stroke="#29a6de" stroke-width="2.3" stroke-linecap="round"/></svg>
<div class="t" style="left:864.00px;top:962.58px;font-size:24px;line-height:24px;color:#383838;font-family:'Liberation Sans', sans-serif;font-weight:700;letter-spacing:0.552px;">Running App Console</div>
<div class="r" style="left:2868px;top:944px;width:62px;height:56px;background:#d5e6ec;border-radius:10px;"></div>
<svg class="r" style="left:2880px;top:958px;" width="40" height="28" viewBox="0 0 40 28"><path d="M4 2 L13 11.5 L4 21" stroke="#3d4d55" stroke-width="2.4" fill="none" stroke-linecap="round"/><path d="M15 22.5 H28" stroke="#3d4d55" stroke-width="2.4" stroke-linecap="round"/></svg>
<div class="r" style="left:2946px;top:944px;width:62px;height:56px;background:#d5e6ec;border-radius:10px;"></div>
<svg class="r" style="left:2962px;top:962px;" width="30" height="20" viewBox="0 0 30 20"><path d="M3 4 L14.5 14 L26 4" stroke="#3d4d55" stroke-width="2.4" fill="none" stroke-linecap="round"/></svg>
<div class="r" style="left:142px;top:1012px;width:2882px;height:557px;background:#fbfbfb;"></div>
<svg class="r" style="left:160px;top:1034px;" width="30" height="32" viewBox="0 0 30 32"><path d="M3.5 6 H24.5" stroke="#505050" stroke-width="3.5" stroke-linecap="round"/><path d="M10 4 C10 2.5 11 1.5 12.5 1.5 H15.5 C17 1.5 18 2.5 18 4" stroke="#505050" stroke-width="2.5" fill="none"/><path d="M4 9 H24 L22.5 28 C22.4 29.5 21.3 30.5 19.8 30.5 H8.2 C6.7 30.5 5.6 29.5 5.5 28 Z" fill="#505050"/></svg>
<svg class="r" style="left:225.5px;top:1033px;" width="26" height="32" viewBox="0 0 26 32"><path d="M3 5 C6 3 12 3 12 9 V22" stroke="#1eaee8" stroke-width="4.2" fill="none" stroke-linecap="round"/><path d="M4.5 19.5 L12 28.5 L19.5 19.5 Z" fill="#1eaee8" stroke="#1eaee8" stroke-width="2" stroke-linejoin="round"/></svg>
<div class="r" style="left:268px;top:1034.5px;width:26px;height:25.0px;background:#ffffff;border:2px solid #666;border-radius:4px;box-sizing:border-box;"></div>
<div class="t" style="left:304.70px;top:1032.30px;font-size:28px;line-height:28px;color:#4a4a4a;font-family:'Liberation Sans', sans-serif;letter-spacing:1.428px;">Preserve output between sessions</div>
<div class="r" style="left:142px;top:1105px;width:2882px;height:57px;background:#e8f3f9;"></div>
<div class="t" style="left:156.00px;top:1116.60px;font-size:28px;line-height:28px;color:#4a4a4a;font-family:'Liberation Sans', sans-serif;font-style:italic;letter-spacing:0.301px;">New session: 23/01/2025, 14:02:31</div>
<div class="r" style="left:142px;top:1569px;width:2882px;height:69px;background:#dee8eb;"></div>
<div class="r" style="left:142px;top:1569px;width:6px;height:69px;background:#1eaee8;"></div>
<div class="t" style="left:163.40px;top:1593.07px;font-size:26px;line-height:26px;color:#8a8a8a;font-family:'Liberation Mono', monospace;">&gt;&gt;&gt; Enter a command (Shift-Enter for new line)</div>
</body></html>
